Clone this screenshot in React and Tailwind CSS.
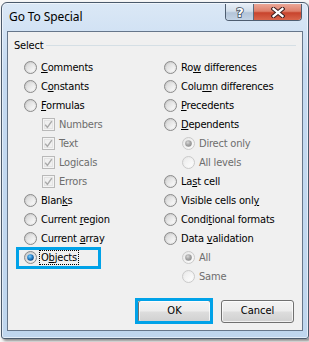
import React, { useId } from "react";

const FONT = "font-['DejaVu_Sans_Condensed','DejaVu_Sans',sans-serif]";

function Radio({ checked, disabled }) {
  const id = useId().replace(/:/g, "");
  const ring = disabled ? "#c9c9c9" : "#8a8a8a";
  return (
    <svg width="13" height="13" viewBox="0 0 13 13" className="shrink-0">
      <defs>
        <linearGradient id={`o${id}`} x1="0" y1="0" x2="1" y2="1">
          <stop offset="0" stopColor={disabled ? "#e6e6e6" : "#c4c4c4"} />
          <stop offset="1" stopColor={disabled ? "#fbfbfb" : "#f6f6f6"} />
        </linearGradient>
        <linearGradient id={`i${id}`} x1="0" y1="0" x2="1" y2="1">
          <stop offset="0" stopColor={disabled ? "#ececec" : "#d6d6d6"} />
          <stop offset="1" stopColor={disabled ? "#fdfdfd" : "#fcfcfc"} />
        </linearGradient>
        <radialGradient id={`d${id}`} cx="0.4" cy="0.35" r="0.7">
          <stop offset="0" stopColor={disabled ? "#d8d8d8" : "#7fd0ff"} />
          <stop offset="0.5" stopColor={disabled ? "#a8a8a8" : "#2a86cc"} />
          <stop offset="1" stopColor={disabled ? "#8c8c8c" : "#0a3f78"} />
        </radialGradient>
      </defs>
      <circle cx="6.5" cy="6.5" r="6" fill={`url(#o${id})`} stroke={ring} strokeWidth="1" />
      <circle cx="6.5" cy="6.5" r="4.3" fill={`url(#i${id})`} />
      {checked && <circle cx="6.5" cy="6.5" r="3.3" fill={`url(#d${id})`} />}
    </svg>
  );
}

function Check() {
  return (
    <svg width="13" height="13" viewBox="0 0 13 13" className="shrink-0">
      <rect x="0.5" y="0.5" width="12" height="12" fill="#f4f4f4" stroke="#b9b9b9" />
      <rect x="2.5" y="2.5" width="8" height="8" fill="#f0f0f0" stroke="#e4e4e4" />
      <path d="M3.2 6.8 L5.4 9.4 L9.8 3.2" fill="none" stroke="#a9a9a9" strokeWidth="1.4" />
    </svg>
  );
}

function U({ children }) {
  return <span className="underline underline-offset-[1px] decoration-1">{children}</span>;
}

function Row({ kind = "radio", sub, checked, disabled, focus, children }) {
  return (
    <div className={`flex h-[19px] items-center ${sub ? "pl-[18px]" : ""}`}>
      {kind === "radio" ? <Radio checked={checked} disabled={disabled} /> : <Check />}
      <span
        className={`text-[11px] leading-[13px] tracking-[-0.2px] whitespace-nowrap ${
          disabled ? "text-[#6d6d6d]" : "text-black"
        } ${focus ? "ml-[2px] border border-dotted border-black pl-[1px] pr-[1px]" : "ml-[4px]"}`}
      >
        {children}
      </span>
    </div>
  );
}

function Button({ children }) {
  return (
    <button className="flex h-[23px] w-[73px] items-center justify-center rounded-[3px] border border-[#707070] bg-[linear-gradient(#f3f3f3,#ececec_48%,#dddddd_52%,#d0d0d0)] text-[11px] text-black shadow-[inset_0_0_0_1px_rgba(255,255,255,0.7)]">
      {children}
    </button>
  );
}

export default function App() {
  return (
    <div className={`relative h-[342px] w-[309px] overflow-hidden bg-[#f7f7f7] ${FONT}`}>
      <div className="ml-[1px] mt-[2px] flex h-[337px] w-[308px] flex-col rounded-t-[6px] rounded-b-[3px] border border-[#4b5a6c] bg-[linear-gradient(180deg,#dbe8f6,#c5daf1_20%,#bfd6ee)] shadow-[2px_2px_3px_rgba(0,0,0,0.45),inset_0_0_0_1px_rgba(255,255,255,0.55)]">
        {/* title bar */}
        <div className="flex h-[28px] items-start justify-between">
          <div className="pl-[7px] pt-[6px] font-['Noto_Sans',sans-serif] text-[12px] leading-[16px] tracking-[-0.1px] text-black">
            Go To Special
          </div>
          <div className="mr-[6px] mt-[1px] flex h-[17px] overflow-hidden rounded-b-[4px] border border-t-0 border-[#4e5d70]">
            <div className="flex h-full w-[28px] items-center justify-center border-r border-[#5b6a7c] bg-[linear-gradient(#e6eef7,#d2deea_45%,#b3c4d8_55%,#c3d3e5)]">
              <svg width="12" height="14" viewBox="0 0 12 14">
                <text
                  x="6"
                  y="12"
                  textAnchor="middle"
                  fontFamily="DejaVu Sans, sans-serif"
                  fontWeight="bold"
                  fontSize="13"
                  fill="#ffffff"
                  stroke="#3c4a5c"
                  strokeWidth="1.6"
                  paintOrder="stroke"
                >
                  ?
                </text>
              </svg>
            </div>
            <div className="flex h-full w-[47px] items-center justify-center bg-[linear-gradient(#eba797,#de806b_45%,#c8442d_55%,#d9654b)]">
              <svg width="14" height="11" viewBox="0 0 14 11">
                <path d="M2.5 1.8 L11.5 9.2 M11.5 1.8 L2.5 9.2" stroke="#3d2020" strokeWidth="4.2" strokeLinecap="square" />
                <path d="M2.5 1.8 L11.5 9.2 M11.5 1.8 L2.5 9.2" stroke="#ffffff" strokeWidth="2.2" strokeLinecap="square" />
              </svg>
            </div>
          </div>
        </div>

        {/* client */}
        <div className="ml-[5px] flex h-[300px] w-[296px] flex-col border border-[#66768a] bg-[#f0f0f0]">
          <div className="mt-[7px] flex h-[13px] items-center pl-[6px] pr-[6px]">
            <span className="text-[11px] leading-[13px] tracking-[-0.2px] text-black">Select</span>
            <div className="ml-[3px] h-px flex-1 bg-[#d5dfe5]" />
          </div>

          <div className="mt-[6px] grid grid-cols-[140px_1fr] pl-[16px]">
            <div className="flex flex-col">
              <Row><U>C</U>omments</Row>
              <Row>C<U>o</U>nstants</Row>
              <Row><U>F</U>ormulas</Row>
              <Row kind="check" sub disabled>Numbers</Row>
              <Row kind="check" sub disabled>Text</Row>
              <Row kind="check" sub disabled>Logicals</Row>
              <Row kind="check" sub disabled>Errors</Row>
              <Row>Blan<U>k</U>s</Row>
              <Row>Current <U>r</U>egion</Row>
              <Row>Current <U>a</U>rray</Row>
              <Row checked focus>O<U>b</U>jects</Row>
            </div>
            <div className="flex flex-col">
              <Row>Ro<U>w</U> differences</Row>
              <Row>Colu<U>m</U>n differences</Row>
              <Row><U>P</U>recedents</Row>
              <Row><U>D</U>ependents</Row>
              <Row sub disabled checked>Direct only</Row>
              <Row sub disabled>All levels</Row>
              <Row>La<U>s</U>t cell</Row>
              <Row>Visible cells onl<U>y</U></Row>
              <Row>Condi<U>t</U>ional formats</Row>
              <Row>Data <U>v</U>alidation</Row>
              <Row sub disabled checked>All</Row>
              <Row sub disabled>Same</Row>
            </div>
          </div>

          <div className="flex-1" />
          <div className="flex justify-end gap-[10px] pb-[7px] pr-[8px]">
            <Button>OK</Button>
            <Button>Cancel</Button>
          </div>
        </div>
      </div>

      {/* annotation highlights */}
      <div className="pointer-events-none absolute left-[16px] top-[247px] h-[22px] w-[85px] border-[3px] border-[#00a2e8]" />
      <div className="pointer-events-none absolute left-[135px] top-[298px] h-[26px] w-[78px] border-[3px] border-[#00a2e8]" />
    </div>
  );
}
